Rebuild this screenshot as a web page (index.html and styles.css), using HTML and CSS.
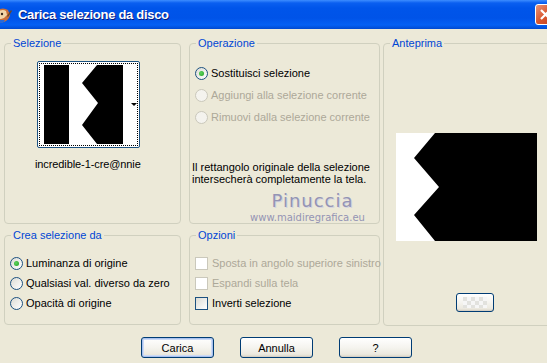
FILE: index.html
```html
<!DOCTYPE html>
<html lang="it">
<head>
    <meta charset="UTF-8">
    <title>Carica selezione da disco</title>
    <link rel="stylesheet" href="styles.css">
</head>
<body>

<div class="window">
    <!-- Title bar -->
    <div class="titlebar">
        <svg class="app-icon" width="12" height="16" viewBox="0 0 12 16">
            <path d="M-2 3 Q3 0 8 3 L10 8 Q9 13 4 15 L-2 15 Z" fill="#c9703a"/>
            <path d="M-1 4 Q3 2 6 4 L7 8 Q5 11 1 12 L-1 12 Z" fill="#f3d6a8"/>
            <circle cx="2" cy="7" r="1.2" fill="#3a2a1a"/>
            <path d="M7 9 L11 3 L12 4 L8 10 Z" fill="#6b4a2a"/>
            <path d="M0 13 L5 13 L3 16 L0 16 Z" fill="#2a6ad8"/>
        </svg>
        <span class="title">Carica selezione da disco</span>
        <span class="close-btn">
            <svg width="21" height="21" viewBox="0 0 21 21"><path d="M6 6 L15 15 M15 6 L6 15" stroke="#fff" stroke-width="2.2"/></svg>
        </span>
    </div>

    <div class="client">
        <div class="panels">
            <!-- left column -->
            <div class="col col-left">
                <fieldset class="group group-top">
                    <legend>Selezione</legend>
                    <div class="thumb">
                        <div class="focus">
                            <svg class="thumb-img" width="86" height="79" viewBox="0 0 86 79">
                                <rect x="0" y="0" width="86" height="79" fill="#fff"/>
                                <rect x="0" y="0" width="25" height="79" fill="#000"/>
                                <polygon points="53,0 38,18 54,38 38,60 53,79 79,79 79,0" fill="#000"/>
                            </svg>
                            <span class="thumb-arrow"></span>
                        </div>
                    </div>
                    <div class="thumb-name">incredible-1-cre@nnie</div>
                </fieldset>

                <fieldset class="group group-bottom">
                    <legend>Crea selezione da</legend>
                    <div class="opt-list">
                        <label class="opt"><span class="radio checked"></span>Luminanza di origine</label>
                        <label class="opt"><span class="radio"></span>Qualsiasi val. diverso da zero</label>
                        <label class="opt"><span class="radio"></span>Opacità di origine</label>
                    </div>
                </fieldset>
            </div>

            <!-- middle column -->
            <div class="col col-mid">
                <fieldset class="group group-top">
                    <legend>Operazione</legend>
                    <div class="opt-list op-list">
                        <label class="opt"><span class="radio checked"></span>Sostituisci selezione</label>
                        <label class="opt disabled"><span class="radio"></span>Aggiungi alla selezione corrente</label>
                        <label class="opt disabled"><span class="radio"></span>Rimuovi dalla selezione corrente</label>
                    </div>
                    <p class="note">Il rettangolo originale della selezione<br>intersecherà completamente la tela.</p>
                    <div class="watermark">
                        <div class="wm-name">Pinuccia</div>
                        <div class="wm-url">www.maidiregrafica.eu</div>
                    </div>
                </fieldset>

                <fieldset class="group group-bottom">
                    <legend>Opzioni</legend>
                    <div class="opt-list">
                        <label class="opt disabled"><span class="check"></span>Sposta in angolo superiore sinistro</label>
                        <label class="opt disabled"><span class="check"></span>Espandi sulla tela</label>
                        <label class="opt"><span class="check"></span>Inverti selezione</label>
                    </div>
                </fieldset>
            </div>

            <!-- right column -->
            <div class="col col-right">
                <fieldset class="group group-full">
                    <legend>Anteprima</legend>
                    <svg class="preview" width="141" height="108" viewBox="0 0 141 108">
                        <rect x="0" y="0" width="141" height="108" fill="#fff"/>
                        <polygon points="39,0 18,25 43,54 18,82 39,108 141,108 141,0" fill="#000"/>
                    </svg>
                    <button class="xp-btn small-btn"><span class="checker"></span></button>
                </fieldset>
            </div>
        </div>

        <!-- Dialog buttons -->
        <div class="actions">
            <button class="xp-btn default">Carica</button>
            <button class="xp-btn">Annulla</button>
            <button class="xp-btn">?</button>
        </div>
    </div>
</div>

</body>
</html>
```

FILE: styles.css
```css
html, body { margin: 0; padding: 0; }
body {
    background: #ece9d8;
    font-family: "Liberation Sans", Arial, sans-serif;
    font-size: 11px;
    color: #000;
}
.window {
    width: 547px;
    height: 363px;
    overflow: hidden;
}

/* title bar */
.titlebar {
    height: 29px;
    display: flex;
    align-items: center;
    background: linear-gradient(to bottom, #3d8dff 0, #0a5ff0 3px, #0055ea 8px, #0053e8 18px, #0460f4 25px, #0049d0 29px);
}
.app-icon { flex: none; }
.title {
    flex: 1;
    margin-left: 6px;
    color: #fff;
    font-weight: bold;
    font-size: 13px;
    letter-spacing: -0.3px;
    text-shadow: 1px 1px 0 #0a1a7a;
}
.close-btn {
    flex: none;
    margin-right: -9px;
    width: 21px;
    height: 21px;
    box-sizing: border-box;
    border: 1px solid #fff;
    border-radius: 3px;
    background: linear-gradient(135deg, #e9957a, #d8572f 50%, #c1401e);
    display: flex;
}
.close-btn svg { margin: -1px; flex: none; }

/* panels */
.panels {
    display: flex;
    padding: 7px 0 0 4px;
    height: 290px;
}
.col { display: flex; flex-direction: column; gap: 4px; flex: none; }
.col-left { width: 177px; }
.col-mid { width: 191px; margin-left: 8px; }
.col-right { width: 184px; margin-left: 3px; }

.group {
    margin: 0;
    padding: 0;
    border: 1px solid #d0d0bf;
    border-radius: 4px;
    min-width: 0;
    box-sizing: border-box;
}
.group legend {
    margin-left: 6px;
    padding: 0 2px;
    line-height: 14px;
    color: #0046d5;
}
.group-top { height: 188px; }
.group-bottom { height: 97px; }
.group-full { height: 290px; }

/* selection thumbnail */
.thumb {
    margin: 11px 0 0 32px;
    width: 103px;
    height: 87px;
    box-sizing: border-box;
    border: 1px solid #1c5180;
    border-radius: 2px;
    background: #fff;
    padding: 1px;
}
.focus {
    height: 100%;
    box-sizing: border-box;
    border: 1px dotted #000;
    display: flex;
    align-items: center;
}
.thumb-img { margin-left: 4px; flex: none; }
.thumb-arrow {
    margin-left: 1px;
    width: 0;
    height: 0;
    border-left: 3px solid transparent;
    border-right: 3px solid transparent;
    border-top: 3px solid #000;
}
.thumb-name {
    margin: 9px 0 0 30px;
    width: 103px;
    text-align: center;
    line-height: 14px;
    white-space: nowrap;
    letter-spacing: -0.1px;
}

/* options */
.opt-list { margin-top: 11px; padding-left: 5px; }
.op-list { margin-top: 12px; }
.op-list .opt { height: 22px; }
.opt {
    display: flex;
    align-items: center;
    height: 20px;
    white-space: nowrap;
}
.opt.disabled { color: #aca899; }
.radio {
    flex: none;
    width: 13px;
    height: 13px;
    box-sizing: border-box;
    margin-right: 3px;
    border: 1px solid #1c5180;
    border-radius: 50%;
    background: linear-gradient(135deg, #dcdcd5, #fff);
    display: flex;
    align-items: center;
    justify-content: center;
}
.radio.checked::after {
    content: "";
    width: 5px;
    height: 5px;
    border-radius: 50%;
    background: radial-gradient(circle at 40% 40%, #5fd35f, #21a121);
}
.disabled .radio { border-color: #cac8bb; background: #f4f3ee; }
.check {
    flex: none;
    width: 13px;
    height: 13px;
    box-sizing: border-box;
    margin-right: 4px;
    border: 1px solid #1c5180;
    background: linear-gradient(135deg, #dcdcd5, #fff);
}
.disabled .check { border-color: #cac8bb; background: #fff; }

.note {
    margin: 33px 0 0 2px;
    line-height: 12px;
}
.watermark {
    margin: 6px 0 0 55px;
    width: 125px;
    text-align: center;
    color: #9494b4;
}
.wm-name {
    font-family: "DejaVu Sans", sans-serif;
    font-size: 18px;
    line-height: 20px;
    letter-spacing: 1px;
    padding-left: 10px;
    text-shadow: 1px 1px 0 #d4d4e0;
}
.wm-url {
    font-family: "DejaVu Sans", sans-serif;
    font-size: 10px;
    line-height: 14px;
}

/* preview */
.preview { display: block; margin: 83px 0 0 12px; }
.xp-btn {
    width: 73px;
    height: 21px;
    box-sizing: border-box;
    border: 1px solid #003c74;
    border-radius: 3px;
    background: linear-gradient(to bottom, #ffffff, #f5f4ef 50%, #ece9df 85%, #d8d3c6);
    box-shadow: inset 0 -1px 0 #d6d0c5;
    font-family: "Liberation Sans", Arial, sans-serif;
    font-size: 11px;
    color: #000;
    padding: 0;
}
.xp-btn.default { box-shadow: inset 0 0 0 1px #a9c1ee, inset 0 0 0 2px #cddbf6; }
.xp-btn.small-btn {
    display: block;
    margin: 52px 0 0 72px;
    width: 38px;
    height: 19px;
}
.checker {
    display: block;
    margin: 3px auto;
    width: 24px;
    height: 11px;
    background: repeating-conic-gradient(#f6f6f6 0 25%, #e2e2de 0 50%) 0 0 / 8px 8px;
}

/* dialog buttons */
.actions {
    display: flex;
    gap: 26px;
    padding: 11px 0 0 141px;
}
```
